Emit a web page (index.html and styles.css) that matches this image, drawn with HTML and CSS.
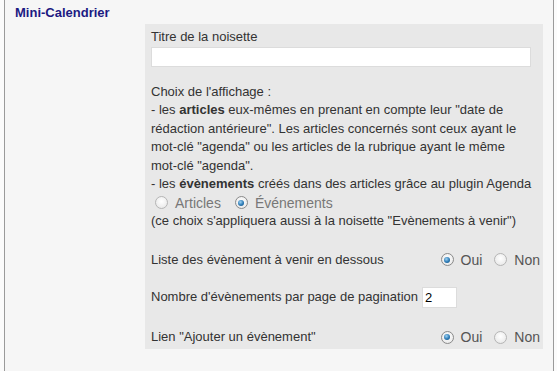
FILE: index.html
```html
<!DOCTYPE html>
<html lang="fr">

<head>
    <meta charset="UTF-8">
    <title>Mini-Calendrier</title>
    <link rel="stylesheet" href="styles.css">
</head>

<body>
    <div class="box">
        <h3 class="box-title">Mini-Calendrier</h3>

        <div class="panel">
            <label class="field-label" for="titre">Titre de la noisette</label>
            <input class="text-input" id="titre" type="text">

            <div class="choice">
                Choix de l'affichage :<br>
                - les <strong>articles</strong> eux-mêmes en prenant en compte leur "date de rédaction antérieure". Les articles concernés sont ceux ayant le <span class="nobr">mot-clé</span> "agenda" ou les articles de la rubrique ayant le même <span class="nobr">mot-clé</span> "agenda".<br>
                - les <strong>évènements</strong> créés dans des articles grâce au plugin Agenda
                <div class="choice-radios">
                    <label><input type="radio" name="source"> Articles</label>
                    <label><input type="radio" name="source" checked> Événements</label>
                </div>
                (ce choix s'appliquera aussi à la noisette "Evènements à venir")
            </div>

            <div class="row row-liste">
                <span>Liste des évènement à venir en dessous</span>
                <span class="yesno">
                    <label><input type="radio" name="liste" checked> Oui</label>
                    <label><input type="radio" name="liste"> Non</label>
                </span>
            </div>

            <div class="row row-nombre">
                <span>Nombre d'évènements par page de pagination</span>
                <input class="num-input" type="text" value="2">
            </div>

            <div class="row row-lien">
                <span>Lien "Ajouter un évènement"</span>
                <span class="yesno">
                    <label><input type="radio" name="lien" checked> Oui</label>
                    <label><input type="radio" name="lien"> Non</label>
                </span>
            </div>
        </div>
    </div>
</body>

</html>
```

FILE: styles.css
```css
* {
    box-sizing: border-box;
}

body {
    margin: 0;
    padding: 0 3px 0 4px;
    background-color: #fbfbfb;
    font-family: "Liberation Sans", Arial, sans-serif;
    font-size: 13px;
    color: #333;
    height: 371px;
    overflow: hidden;
}

.box {
    height: 100%;
    background-color: #f6f6f6;
    border-left: 1px solid #9a9a9a;
    border-right: 1px solid #9a9a9a;
    padding: 5px 9px 0 10px;
}

.box-title {
    margin: 0;
    font-size: 13px;
    line-height: 16px;
    font-weight: bold;
    color: #1c1a82;
}

.panel {
    margin: 3px 0 0 130px;
    width: 398px;
    background-color: #e8e8e8;
    padding: 4px 3px 2px 6px;
    line-height: 18.5px;
}

.nobr {
    white-space: nowrap;
}

.field-label {
    display: block;
}

.text-input {
    display: block;
    width: 380px;
    height: 20px;
    margin: 0;
    border: 1px solid #dcdcdc;
    background-color: #fff;
    font: inherit;
}

.choice {
    margin-top: 16px;
}

.choice strong {
    color: #333;
}

.choice-radios {
    display: flex;
    gap: 14px;
    padding-left: 4px;
    font-size: 14px;
    color: #777;
}

.choice-radios label,
.yesno label {
    display: flex;
    align-items: center;
}

input[type="radio"] {
    appearance: none;
    -webkit-appearance: none;
    width: 13px;
    height: 13px;
    margin: 0 7px 0 0;
    border-radius: 50%;
    border: 1px solid #b5b5b5;
    background: radial-gradient(circle at 50% 40%, #ffffff 0%, #ececec 70%, #dcdcdc 100%);
    position: relative;
}

input[type="radio"]:checked {
    border-color: #8a8a8a;
}

input[type="radio"]:checked::after {
    content: "";
    position: absolute;
    left: 2.5px;
    top: 2.5px;
    width: 6px;
    height: 6px;
    border-radius: 50%;
    background: radial-gradient(circle at 40% 35%, #9fd3f3 0%, #2b79b4 55%, #0f4c7c 100%);
}

.row {
    display: flex;
    align-items: center;
    justify-content: space-between;
}

.row-liste {
    margin-top: 20px;
}

.yesno {
    display: flex;
    gap: 12px;
    font-size: 14px;
    color: #555;
}

.row-nombre {
    justify-content: flex-start;
    gap: 4px;
    margin-top: 18px;
}

.num-input {
    width: 35px;
    height: 21px;
    margin: 0;
    border: 1px solid #dcdcdc;
    background-color: #fff;
    font: inherit;
    padding: 0 2px;
}

.row-lien {
    margin-top: 20px;
}
```
